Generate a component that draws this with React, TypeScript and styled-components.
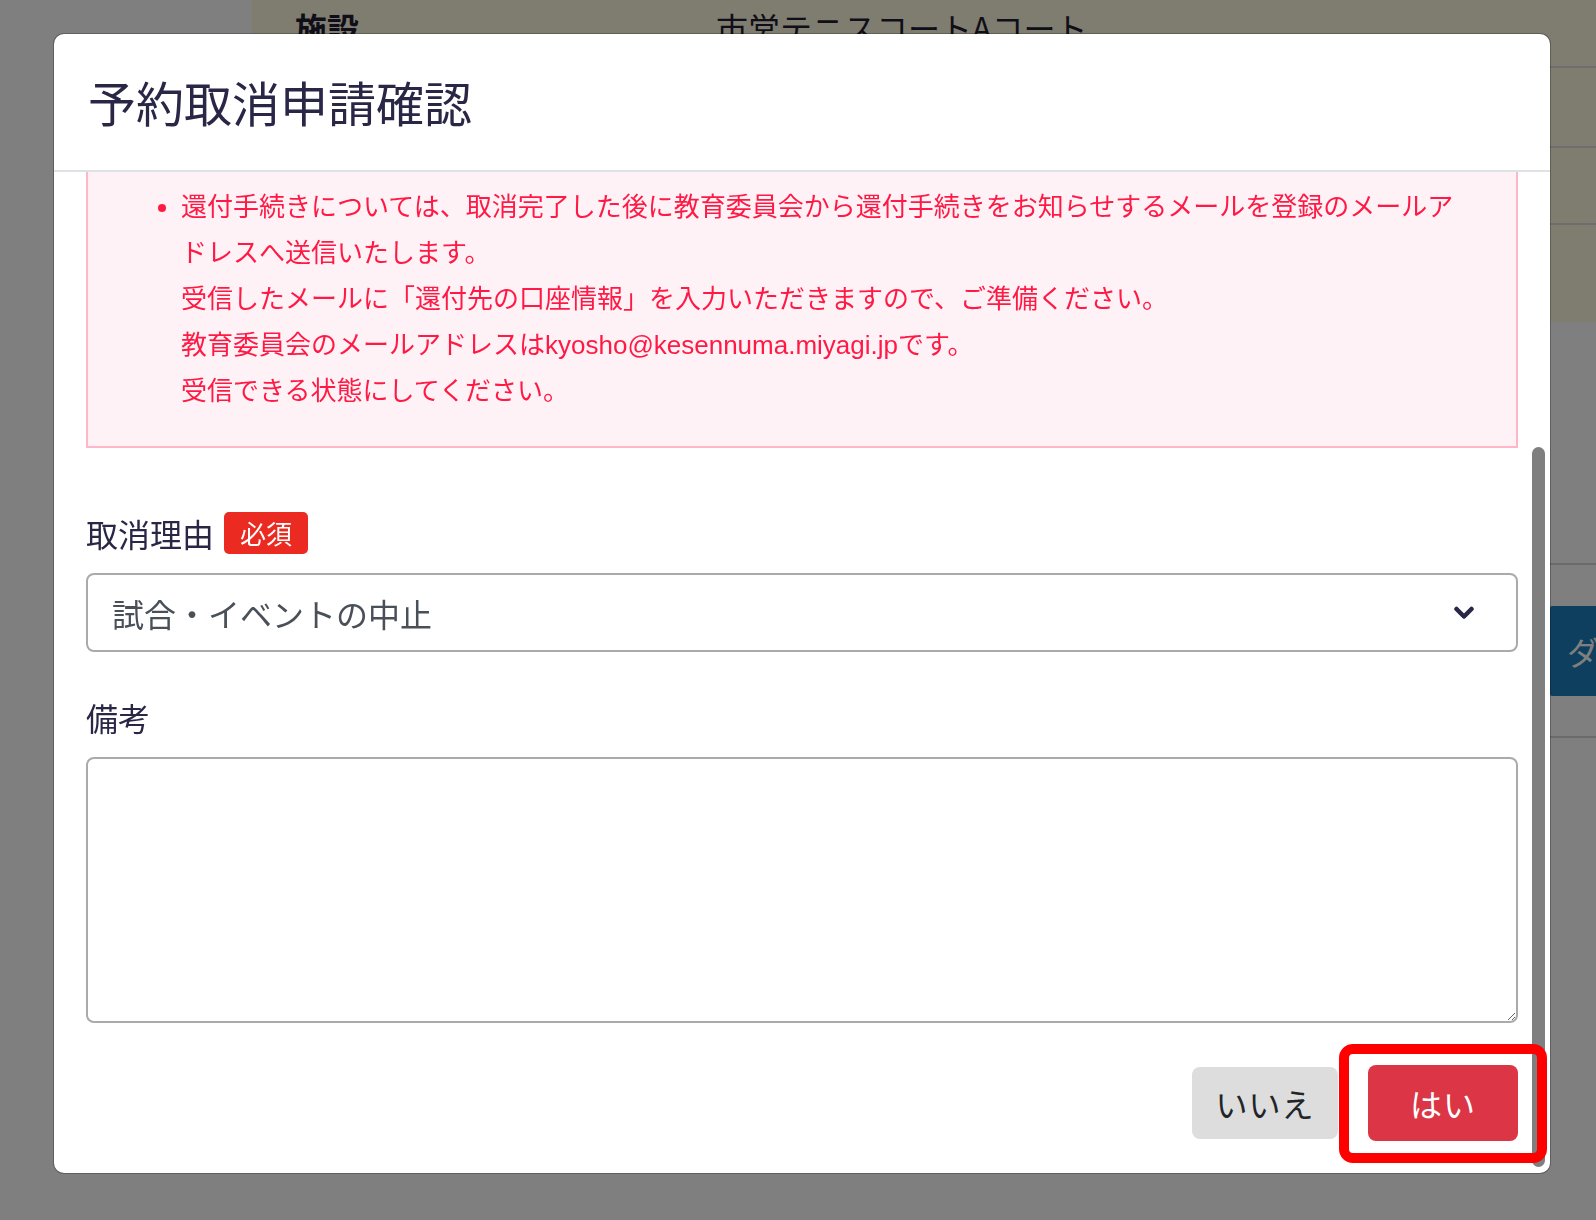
import React from 'react';
import styled, { createGlobalStyle } from 'styled-components';

const GlobalStyle = createGlobalStyle`
  html, body {
    margin: 0;
    padding: 0;
    overflow: hidden;
    background: #fff;
  }
  body {
    font-family: "Noto Sans CJK JP", "Noto Sans", sans-serif;
  }
  * {
    box-sizing: border-box;
  }
`;

/* ---------- page behind the dialog ---------- */

const Page = styled.div`
  display: flex;
  width: 1800px;
  height: 1220px;
`;

const Sidebar = styled.aside`
  flex: none;
  width: 252px;
  background: #fff;
`;

const Main = styled.main`
  flex: 1;
  display: flex;
  flex-direction: column;
`;

const InfoTable = styled.div`
  display: flex;
  flex-direction: column;
  background: #fffae0;
`;

const InfoRow = styled.div<{ $height: number; $last?: boolean }>`
  display: grid;
  grid-template-columns: 421px 1fr;
  height: ${(p) => p.$height}px;
  padding: 3px 0 0 43px;
  border-bottom: ${(p) => (p.$last ? 'none' : '2px solid #dcdcdc')};
  font-size: 32px;
  line-height: 48px;
  color: #1f1d33;
`;

const InfoLabel = styled.span`
  font-weight: 700;
`;

const Spacer = styled.div`
  height: 243px;
  border-bottom: 2px solid #d6d6d6;
`;

const ActionRow = styled.div`
  display: flex;
  justify-content: flex-end;
  align-items: center;
  height: 173px;
  border-bottom: 2px solid #d6d6d6;
`;

const PrimaryButton = styled.button`
  width: 250px;
  height: 90px;
  padding: 0 0 0 17px;
  border: none;
  border-radius: 2px;
  background: #1c7ebc;
  color: #fff;
  font-family: inherit;
  font-size: 32px;
  text-align: left;
`;

/* ---------- dialog ---------- */

const Backdrop = styled.div`
  position: fixed;
  inset: 0;
  padding: 34px 0 0 54px;
  background: rgba(0, 0, 0, 0.5);
`;

const Modal = styled.div`
  position: relative;
  display: flex;
  flex-direction: column;
  width: 1496px;
  height: 1139px;
  background: #fff;
  border-radius: 10px;
  box-shadow: 0 0 0 1px rgba(0, 0, 0, 0.25);
  overflow: hidden;
`;

const Header = styled.div`
  display: flex;
  align-items: center;
  flex: none;
  height: 138px;
  padding: 0 34px;
  border-bottom: 2px solid #dee2e6;
`;

const Title = styled.h2`
  margin: 0;
  font-size: 48px;
  font-weight: 400;
  line-height: 1.2;
  color: #2a2646;
`;

const Body = styled.div`
  flex: 1;
  display: flex;
  flex-direction: column;
  padding: 0 32px 32px;
  overflow: hidden;
`;

const Notice = styled.div`
  padding: 12px 48px 32px 30px;
  border: 2px solid #ffb6c9;
  border-top: none;
  background: #fff2f6;
  color: #ff1a45;
  font-family: "Liberation Sans", "Noto Sans CJK JP", sans-serif;
  font-size: 26px;
  line-height: 46px;
`;

const NoticeList = styled.ul`
  margin: 0;
  padding-left: 63px;
`;

const Field = styled.div<{ $top: number }>`
  display: flex;
  flex-direction: column;
  gap: 16px;
  margin-top: ${(p) => p.$top}px;
`;

const Label = styled.label`
  display: flex;
  align-items: center;
  gap: 10px;
  height: 48px;
  font-size: 32px;
  line-height: 48px;
  color: #2a2646;
`;

const RequiredBadge = styled.span`
  display: inline-flex;
  align-items: center;
  height: 42px;
  padding: 0 16px;
  border-radius: 5px;
  background: #eb2a22;
  color: #fff;
  font-size: 26px;
  line-height: 1;
`;

const SelectWrap = styled.div`
  position: relative;
`;

const Select = styled.select`
  display: block;
  width: 100%;
  height: 79px;
  padding: 0 70px 0 24px;
  border: 2px solid #aaa;
  border-radius: 8px;
  background: #fff;
  color: #495057;
  font-family: inherit;
  font-size: 32px;
  appearance: none;
  -webkit-appearance: none;
`;

const Chevron = styled.svg`
  position: absolute;
  top: 50%;
  right: 44px;
  width: 20px;
  height: 14px;
  transform: translateY(-50%);
  pointer-events: none;
`;

const TextArea = styled.textarea`
  display: block;
  width: 100%;
  height: 266px;
  padding: 12px 24px;
  border: 2px solid #aaa;
  border-radius: 8px;
  background: #fff;
  color: #495057;
  font-family: inherit;
  font-size: 32px;
  resize: vertical;
`;

const Footer = styled.div`
  display: flex;
  justify-content: flex-end;
  align-items: center;
  gap: 30px;
  margin-top: 42px;
`;

const Button = styled.button<{ $variant: 'cancel' | 'danger' }>`
  width: ${(p) => (p.$variant === 'danger' ? 150 : 146)}px;
  height: ${(p) => (p.$variant === 'danger' ? 76 : 72)}px;
  border: none;
  border-radius: 8px;
  background: ${(p) => (p.$variant === 'danger' ? '#dc3545' : '#dddddd')};
  color: ${(p) => (p.$variant === 'danger' ? '#fff' : '#212529')};
  font-family: inherit;
  font-size: 32px;
  letter-spacing: 1px;
`;

const Highlight = styled.div`
  position: relative;
  display: flex;
`;

const HighlightFrame = styled.span`
  position: absolute;
  top: -21px;
  bottom: -22px;
  left: -29px;
  right: -29px;
  border: 10px solid #ff0000;
  border-radius: 14px;
  pointer-events: none;
  z-index: 2;
`;

const ScrollThumb = styled.div`
  position: absolute;
  top: 413px;
  bottom: 6px;
  right: 5px;
  width: 13px;
  border-radius: 7px;
  background: #7f7f7f;
  z-index: 1;
`;

const App: React.FC = () => {
  return (
    <>
      <GlobalStyle />
      <Page>
        <Sidebar />
        <Main>
          <InfoTable>
            <InfoRow $height={68}>
              <InfoLabel>施設</InfoLabel>
              <span>市営テニスコートAコート</span>
            </InfoRow>
            <InfoRow $height={80} />
            <InfoRow $height={77} />
            <InfoRow $height={97} $last />
          </InfoTable>
          <Spacer />
          <ActionRow>
            <PrimaryButton>ダウンロード</PrimaryButton>
          </ActionRow>
        </Main>
      </Page>

      <Backdrop>
        <Modal role="dialog" aria-labelledby="cancel-title">
          <Header>
            <Title id="cancel-title">予約取消申請確認</Title>
          </Header>
          <Body>
            <Notice>
              <NoticeList>
                <li>
                  還付手続きについては、取消完了した後に教育委員会から還付手続きをお知らせするメールを登録のメールアドレスへ送信いたします。
                  <br />
                  受信したメールに「還付先の口座情報」を入力いただきますので、ご準備ください。
                  <br />
                  教育委員会のメールアドレスはkyosho@kesennuma.miyagi.jpです。
                  <br />
                  受信できる状態にしてください。
                </li>
              </NoticeList>
            </Notice>

            <Field $top={61}>
              <Label htmlFor="reason">
                取消理由
                <RequiredBadge>必須</RequiredBadge>
              </Label>
              <SelectWrap>
                <Select id="reason" defaultValue="event">
                  <option value="event">試合・イベントの中止</option>
                  <option value="weather">天候不良</option>
                  <option value="other">その他</option>
                </Select>
                <Chevron viewBox="0 0 20 14" aria-hidden="true">
                  <path
                    d="M2.5 3 L10 10.5 L17.5 3"
                    fill="none"
                    stroke="#2a2646"
                    strokeWidth="4.5"
                    strokeLinecap="round"
                    strokeLinejoin="round"
                  />
                </Chevron>
              </SelectWrap>
            </Field>

            <Field $top={41}>
              <Label htmlFor="note">備考</Label>
              <TextArea id="note" />
            </Field>

            <Footer>
              <Button $variant="cancel">いいえ</Button>
              <Highlight>
                <Button $variant="danger">はい</Button>
                <HighlightFrame />
              </Highlight>
            </Footer>
          </Body>
          <ScrollThumb />
        </Modal>
      </Backdrop>
    </>
  );
};

export default App;
